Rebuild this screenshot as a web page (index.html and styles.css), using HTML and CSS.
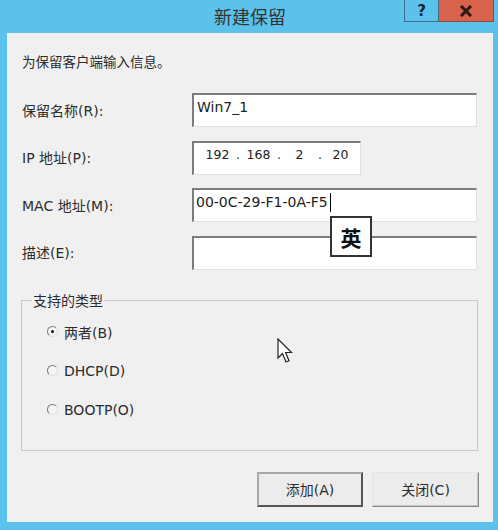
FILE: index.html
```html
<!DOCTYPE html>
<html lang="zh-CN">
<head>
<meta charset="utf-8">
<title>新建保留</title>
<link rel="stylesheet" href="styles.css">
</head>
<body>
<div class="window">
  <div class="titlebar">
    <div class="title">新建保留</div>
    <div class="controls">
      <div class="ctl help">?</div>
      <div class="ctl close">
        <svg width="14" height="12" viewBox="0 0 14 12"><path d="M2 1 L12 11 M12 1 L2 11" stroke="#2a1a14" stroke-width="3"/></svg>
      </div>
    </div>
  </div>
  <div class="client">
    <div class="intro">为保留客户端输入信息。</div>
    <div class="form">
      <label class="lbl">保留名称(R):</label>
      <div class="field wide">Win7_1</div>
      <label class="lbl">IP 地址(P):</label>
      <div class="field ip">
        <span class="seg">192</span><span class="dot">.</span><span class="seg">168</span><span class="dot">.</span><span class="seg">2</span><span class="dot">.</span><span class="seg">20</span>
      </div>
      <label class="lbl">MAC 地址(M):</label>
      <div class="field wide mac">00-0C-29-F1-0A-F5<span class="caret"></span></div>
      <label class="lbl">描述(E):</label>
      <div class="field wide"></div>
    </div>
    <fieldset class="group">
      <legend>支持的类型</legend>
      <div class="radio"><span class="rb checked"></span><span>两者(B)</span></div>
      <div class="radio"><span class="rb"></span><span>DHCP(D)</span></div>
      <div class="radio"><span class="rb"></span><span>BOOTP(O)</span></div>
    </fieldset>
    <div class="buttons">
      <div class="btn default">添加(A)</div>
      <div class="btn">关闭(C)</div>
    </div>
  </div>
  <div class="ime">英</div>
  <svg class="cursor" width="16" height="27" viewBox="0 0 16 27">
    <path d="M1 1 L1 20 L5.5 15.5 L9 24 L12 22.7 L8.6 14.5 L14.5 14.5 Z" fill="#fff" stroke="#222" stroke-width="1.2" stroke-linejoin="miter"/>
  </svg>
</div>
</body>
</html>
```

FILE: styles.css
```css
html, body {
  margin: 0;
  padding: 0;
}
body {
  width: 498px;
  height: 530px;
  background: #5cc2eb;
  font-family: "DejaVu Sans", "Noto Sans CJK SC", sans-serif;
  color: #2c2c2c;
  overflow: hidden;
}
.window {
  position: relative;
  width: 498px;
  height: 530px;
}
.titlebar {
  position: relative;
  height: 33px;
}
.title {
  text-align: center;
  font-family: "Noto Sans CJK SC", sans-serif;
  font-size: 18px;
  line-height: 33px;
  color: #333;
  padding-left: 2px;
}
.controls {
  position: absolute;
  top: 0;
  left: 404px;
  display: flex;
}
.ctl {
  height: 22px;
  display: flex;
  align-items: center;
  justify-content: center;
  box-sizing: border-box;
}
.help {
  width: 35px;
  background: #5cc2eb;
  border: 1px solid #3d6f8c;
  border-top: none;
  color: #12283a;
  font-weight: bold;
  font-size: 15px;
}
.close {
  width: 55px;
  background: #d9634c;
  border: 1px solid #8f4a3c;
  border-top: none;
  border-left: none;
}
.client {
  margin: 0 5px 0 7px;
  height: 489px;
  box-sizing: border-box;
  background: #f0f0f0;
  padding: 21px 14px 0 15px;
}
.intro {
  font-size: 13.5px;
  line-height: 16px;
}
.form {
  margin-top: 23px;
  display: grid;
  grid-template-columns: 170px 285px;
  grid-auto-rows: 34px;
  row-gap: 13.5px;
  align-items: center;
}
.lbl {
  font-size: 14px;
  line-height: 16px;
  padding-top: 1px;
}
.field {
  height: 34px;
  box-sizing: border-box;
  background: #fff;
  border-top: 2px solid #7c7c7c;
  border-left: 2px solid #7c7c7c;
  border-right: 1px solid #e2e2e2;
  border-bottom: 1px solid #e2e2e2;
  font-size: 14px;
  line-height: 20px;
  padding: 2px 0 0 3px;
  color: #222;
  white-space: nowrap;
}
.wide {
  width: 285px;
}
.ip {
  width: 169px;
  display: flex;
  padding-left: 9px;
  font-size: 12.5px;
}
.seg {
  width: 29px;
  text-align: center;
}
.dot {
  width: 12px;
  text-align: center;
}
.mac {
  display: flex;
  align-items: flex-start;
  padding-left: 2px;
}
.caret {
  display: inline-block;
  width: 1px;
  height: 19px;
  background: #000;
  margin-left: 2px;
  margin-top: 1px;
}
.group {
  margin: 23px 0 0 -1px;
  width: 457px;
  box-sizing: border-box;
  border: 1px solid #c9c9c9;
  padding: 13px 0 30px 25px;
}
.group legend {
  font-size: 14px;
  line-height: 16px;
  padding: 0 1px;
  margin-left: -15px;
}
.radio {
  display: flex;
  align-items: center;
  height: 20px;
  font-size: 14px;
  gap: 6px;
}
.radio + .radio {
  margin-top: 19px;
}
.rb {
  width: 9px;
  height: 9px;
  border-radius: 50%;
  border: 1px solid;
  border-color: #7a7a7a #dedede #dedede #7a7a7a;
  background: #f4f4f4;
  position: relative;
}
.rb.checked::after {
  content: "";
  position: absolute;
  left: 3px;
  top: 3px;
  width: 3px;
  height: 3px;
  border-radius: 50%;
  background: #111;
}
.buttons {
  margin-top: 21px;
  display: flex;
  justify-content: flex-end;
  gap: 9px;
}
.btn {
  width: 107px;
  height: 35px;
  box-sizing: border-box;
  display: flex;
  align-items: center;
  justify-content: center;
  font-size: 14px;
  background: #ececec;
  border: 1px solid;
  border-color: #e6e6e6 #8a8a8a #8a8a8a #e6e6e6;
  box-shadow: inset -1px -1px 0 #c4c4c4;
}
.btn.default {
  width: 106px;
  border: 2px solid;
  border-color: #a8a8a8 #555 #555 #a8a8a8;
  box-shadow: none;
}
.ime {
  position: absolute;
  left: 330px;
  top: 216px;
  width: 42px;
  height: 41px;
  box-sizing: border-box;
  border: 2px solid #333;
  background: #fff;
  display: flex;
  align-items: center;
  justify-content: center;
  font-size: 21px;
  font-weight: bold;
  font-family: "Noto Sans CJK SC", sans-serif;
  color: #111;
}
.cursor {
  position: absolute;
  left: 277px;
  top: 338px;
}
```
